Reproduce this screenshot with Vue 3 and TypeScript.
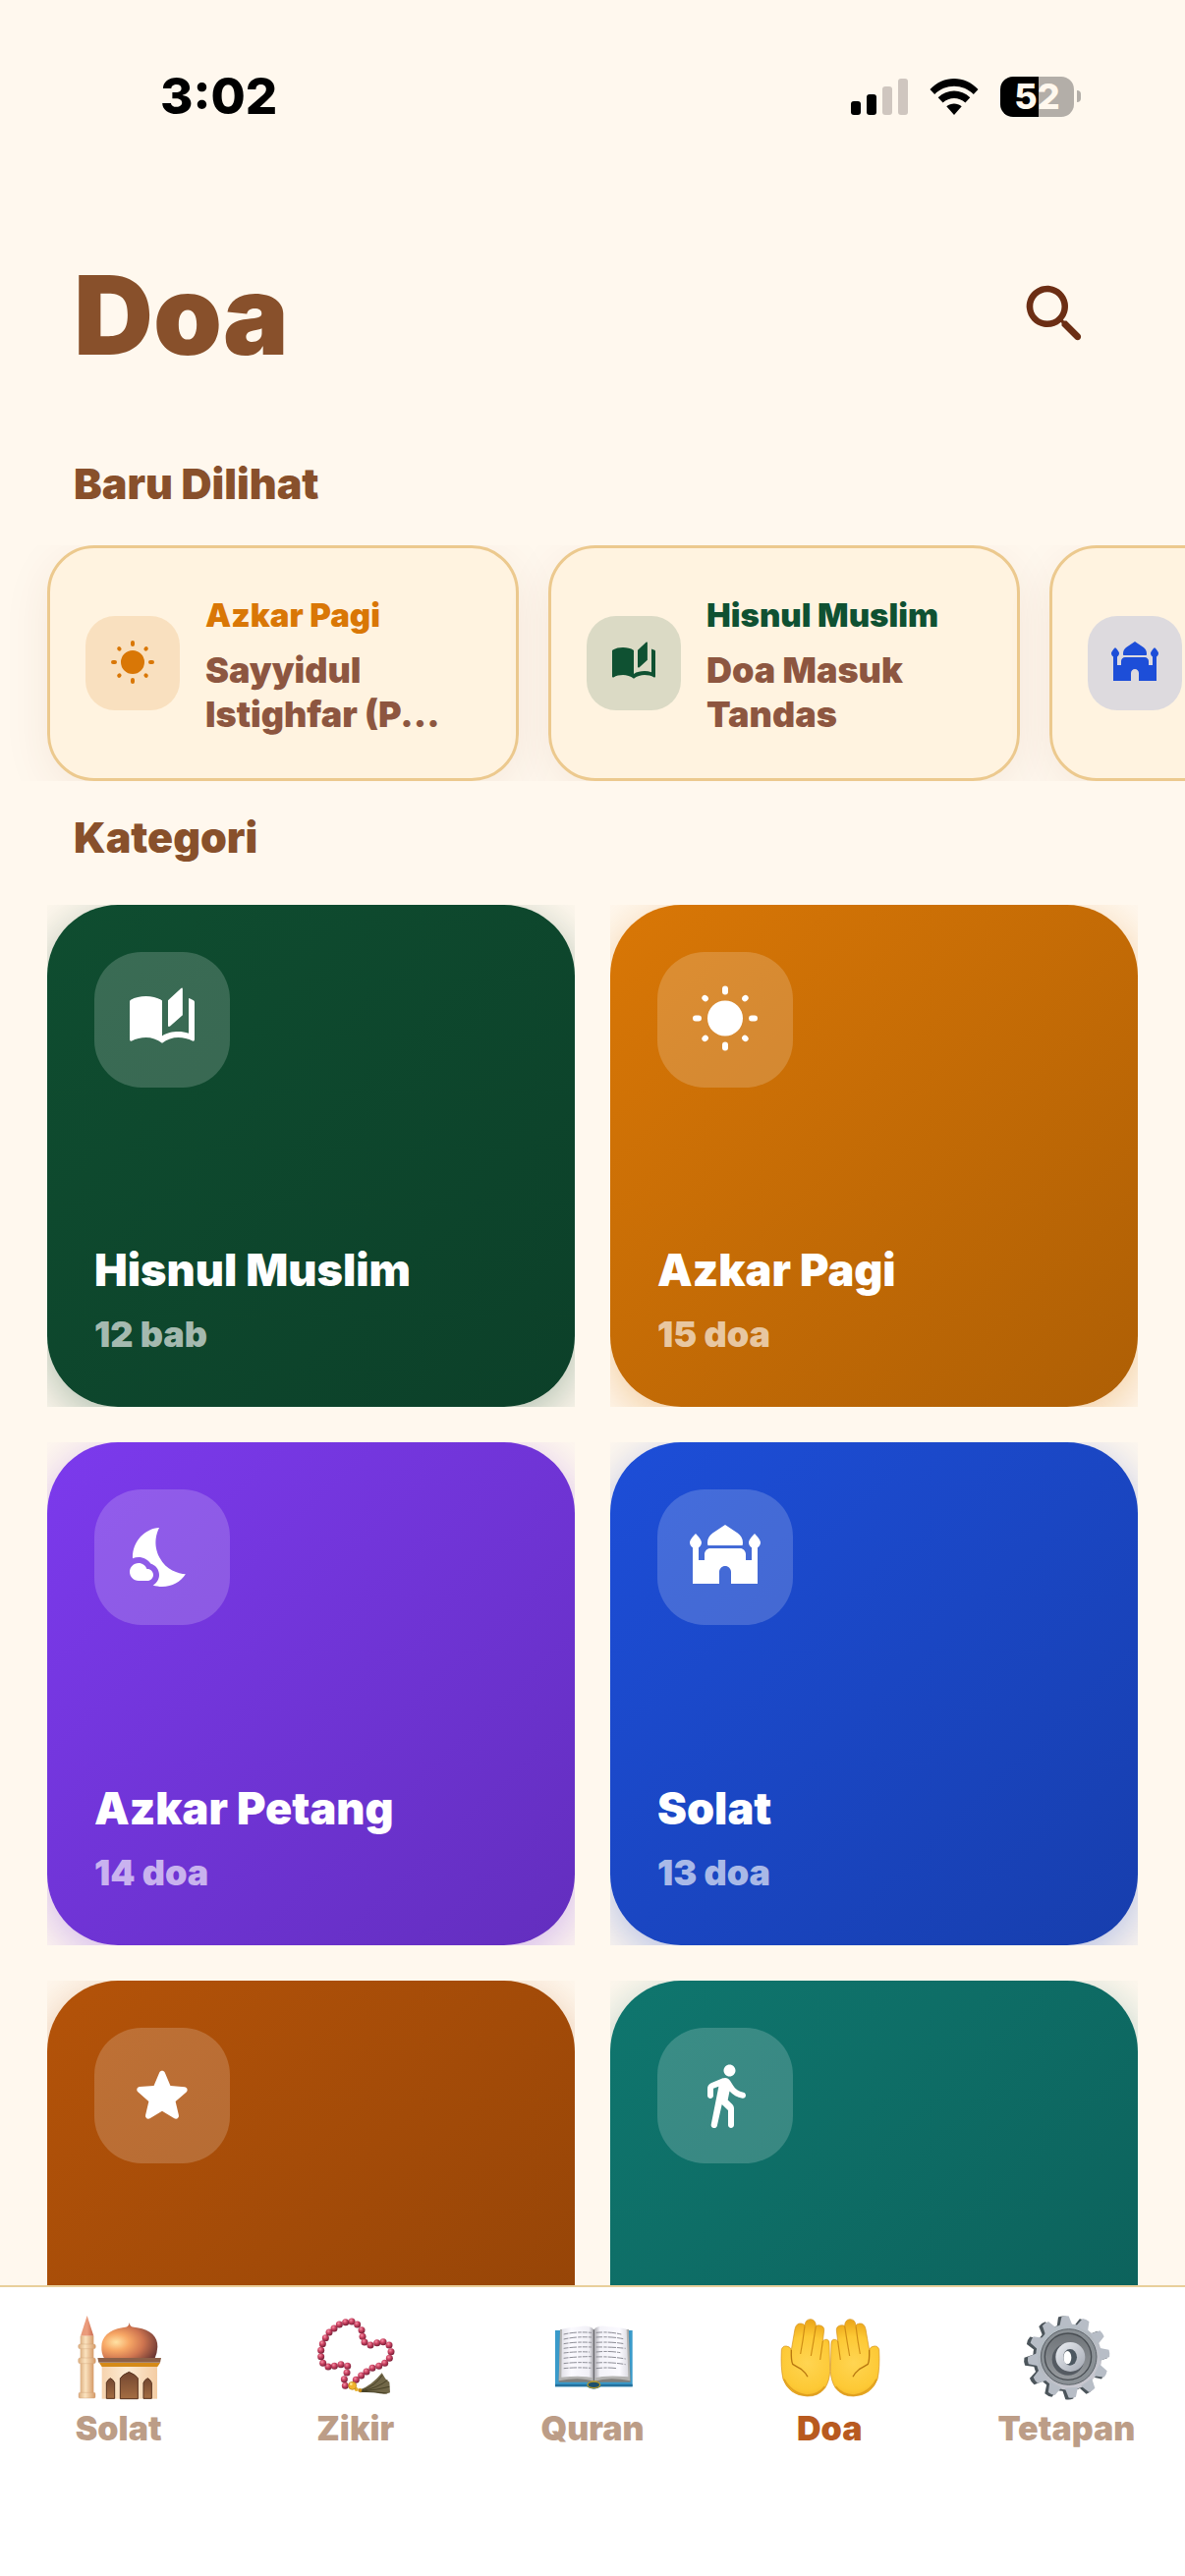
<script setup lang="ts">
type IconName = 'book' | 'sun' | 'moon' | 'mosque' | 'star' | 'walk'

interface RecentItem {
  icon: IconName
  color: string
  category?: string
  name?: string
}

interface Category {
  icon: IconName
  from: string
  to: string
  title?: string
  count?: string
}

const icons: Record<IconName, string> = {
  book: 'M1 5.9Q1 5.5 1.35 5.25C2.8 4.4 4.6 4 6.5 4C8.45 4 10.55 4.4 12 5.5V17.5C13.45 16.4 15.55 16 17.5 16C18.7 16 19.8 16.2 21 16.6V4.7C21.8 5 22.3 5.2 22.65 5.4Q23 5.6 23 6V18.7Q23 19.4 22.3 19.2C21 18.4 19.1 18 17.5 18C15.6 18 13.6 18.6 12 19.9C10.4 18.6 8.4 18 6.5 18C4.9 18 3 18.4 1.7 19.2Q1 19.4 1 18.7ZM14 5.4L18.4 1.3Q18.95 1 18.95 1.6V10.4L14.7 14.2Q14 14.5 14 13.9Z',
  sun: 'M12 5.5a6 6 0 1 0 0 12a6 6 0 1 0 0-12ZM11 1.5a1 1 0 0 1 2 0v1a1 1 0 0 1-2 0ZM11 20.5a1 1 0 0 1 2 0v1a1 1 0 0 1-2 0ZM2 10.5h1a1 1 0 0 1 0 2h-1a1 1 0 0 1 0-2ZM21 10.5h1a1 1 0 0 1 0 2h-1a1 1 0 0 1 0-2ZM4.3 5.2a1 1 0 0 1 1.4-1.4l.4.4a1 1 0 0 1-1.4 1.4ZM18.3 3.8a1 1 0 0 1 1.4 1.4l-.4.4a1 1 0 0 1-1.4-1.4ZM4.3 17.8l.4-.4a1 1 0 0 1 1.4 1.4l-.4.4a1 1 0 0 1-1.4-1.4ZM19.7 17.8a1 1 0 0 1-1.4 1.4l-.4-.4a1 1 0 0 1 1.4-1.4Z',
  moon: 'M11.1 12.08C8.77 7.57 10.2 3.6 11.03 2.01C6.27 2.2 1.98 6.59 1.98 12c0 .14.02.28.02.42C2.62 12.15 3.29 12 4 12c1.66 0 3.18.83 4.1 2.15C9.77 14.63 11 16.17 11 18c0 1.52-.87 2.83-2.12 3.51c.98.32 2.03.5 3.11.5c3.5 0 6.28-1.6 7.97-4.22C17.5 17.52 13.38 16.52 11.1 12.08ZM7 16l-.18 0C6.4 14.84 5.3 14 4 14c-1.66 0-3 1.34-3 3s1.34 3 3 3h3c1.1 0 2-.9 2-2C9 16.9 8.1 16 7 16Z',
  mosque: 'M6.15 8C6.05 7.7 6 7.4 6 7.09C6 5.78 6.65 4.56 7.74 3.84L12 1L16.26 3.84C17.35 4.56 18 5.78 18 7.09C18 7.4 17.95 7.7 17.85 8ZM24 7c0-1.1-2-3-2-3s-2 1.9-2 3c0 .74.4 1.38 1 1.72V13h-2v-2c0-1.1-.9-2-2-2H7c-1.1 0-2 .9-2 2v2H3V8.72C3.6 8.38 4 7.74 4 7c0-1.1-2-3-2-3S0 5.9 0 7c0 .74.4 1.38 1 1.72V21h9v-4c0-1.1.9-2 2-2s2 .9 2 2v4h9V8.72C23.6 8.38 24 7.74 24 7Z',
  star: 'M12 17.27l4.15 2.51c.76.46 1.69-.22 1.49-1.08l-1.1-4.72 3.67-3.18c.67-.58.31-1.68-.57-1.75l-4.83-.41-1.89-4.46c-.34-.81-1.5-.81-1.84 0L9.19 8.63l-4.83.41c-.88.07-1.24 1.17-.57 1.75l3.67 3.18-1.1 4.72c-.2.86.73 1.54 1.49 1.08l4.15-2.5z',
  walk: 'M13.5 5.5c1.1 0 2-.9 2-2s-.9-2-2-2-2 .9-2 2 .9 2 2 2zM9.8 8.9L7.24 21.81c-.13.61.35 1.19.98 1.19h.08c.47 0 .87-.32.98-.78L10.9 15l2.1 2v5c0 .55.45 1 1 1s1-.45 1-1v-5.64c0-.55-.22-1.07-.62-1.45L12.9 13.5l.6-3c1.07 1.24 2.62 2.13 4.36 2.41.6.09 1.14-.39 1.14-1 0-.49-.36-.9-.85-.98-1.52-.25-2.78-1.15-3.45-2.33l-1-1.6c-.4-.6-1-1-1.7-1-.3 0-.5.1-.8.1L7.22 7.78C6.48 8.1 6 8.82 6 9.63V12c0 .55.45 1 1 1s1-.45 1-1V9.6l1.8-.7z'
}

const recents: RecentItem[] = [
  { icon: 'sun', color: '#d97706', category: 'Azkar Pagi', name: 'Sayyidul Istighfar (P...' },
  { icon: 'book', color: '#0f5132', category: 'Hisnul Muslim', name: 'Doa Masuk Tandas' },
  { icon: 'mosque', color: '#1d4ed8' }
]

const categories: Category[] = [
  { icon: 'book', from: '#0f4d30', to: '#0c4029', title: 'Hisnul Muslim', count: '12 bab' },
  { icon: 'sun', from: '#d97706', to: '#ae5f05', title: 'Azkar Pagi', count: '15 doa' },
  { icon: 'moon', from: '#7c3aed', to: '#632ebe', title: 'Azkar Petang', count: '14 doa' },
  { icon: 'mosque', from: '#1d4ed8', to: '#173ead', title: 'Solat', count: '13 doa' },
  { icon: 'star', from: '#b45309', to: '#904207' },
  { icon: 'walk', from: '#0f766e', to: '#0c5e58' }
]

const beads: [number, number][] = [
  [953, 159], [970, 168], [983, 185], [986, 205], [992, 222], [1010, 231], [1030, 224], [1049, 221],
  [1067, 231], [1073, 251], [1068, 271], [1054, 286], [1036, 295], [1016, 301], [998, 312], [982, 324],
  [966, 337], [933, 355], [930, 335], [938, 315], [940, 295], [920, 290], [900, 295], [881, 297],
  [865, 286], [859, 266], [859, 247], [864, 227], [873, 209], [884, 192], [899, 180], [915, 168], [934, 161]
]

const teeth = Array.from({ length: 12 }, (_, i) => i * 30 - 5)

const tabs = [
  { id: 'solat', label: 'Solat', box: '98 120 288 288' },
  { id: 'zikir', label: 'Zikir', box: '821 120 288 288' },
  { id: 'quran', label: 'Quran', box: '345 120 288 288' },
  { id: 'doa', label: 'Doa', box: '49 120 288 288' },
  { id: 'tetapan', label: 'Tetapan', box: '772 120 288 288' }
]
const activeTab = 'doa'
</script>

<template>
  <div class="app">
    <header class="status">
      <span class="time">3:02</span>
      <div class="status-icons">
        <svg class="signal" viewBox="0 0 58 37" aria-hidden="true">
          <rect x="0" y="23" width="10" height="14" rx="3" />
          <rect x="16" y="16" width="10" height="21" rx="3" />
          <rect x="32" y="8" width="10" height="29" rx="3" fill="#cfc6bf" />
          <rect x="48" y="0" width="10" height="37" rx="3" fill="#cfc6bf" />
        </svg>
        <svg class="wifi" viewBox="0 0 50 37" aria-hidden="true">
          <path d="M0.5 11C14-3.6 36-3.6 49.5 11L44.8 16C34 5 16 5 5.2 16Z" />
          <path d="M8.7 19.3C18 10.300 32 10.300 41.300 19.300L36.400 24.500C30 18.400 20 18.400 13.600 24.500Z" />
          <path d="M17.300 28.300C22 24.600 28 24.600 32.700 28.300L25 37Z" />
        </svg>
        <div class="battery-wrap">
          <span class="battery">52</span>
          <span class="battery-tip"></span>
        </div>
      </div>
    </header>

    <main class="content">
      <div class="heading">
        <h1>Doa</h1>
        <button class="search" type="button" aria-label="Cari">
          <svg viewBox="0 0 24 24" aria-hidden="true">
            <path d="M15.500 14h-.79l-.28-.27c1.200-1.400 1.820-3.310 1.480-5.340-.47-2.780-2.790-5-5.590-5.340-4.230-.52-7.790 3.040-7.270 7.270.34 2.800 2.560 5.120 5.340 5.590 2.030.34 3.940-.28 5.340-1.480l.27.28v.79l4.250 4.250c.41.41 1.080.41 1.490 0 .41-.41.41-1.080 0-1.490L15.500 14zm-6 0C7.010 14 5 11.990 5 9.500S7.010 5 9.500 5 14 7.010 14 9.500 11.990 14 9.500 14z" />
          </svg>
        </button>
      </div>

      <section>
        <h2 class="section-title">Baru Dilihat</h2>
        <div class="recent-row">
          <button v-for="item in recents" :key="item.icon" class="recent" type="button" :style="{ '--tone': item.color }">
            <span class="recent-icon">
              <svg viewBox="0 0 24 24" aria-hidden="true"><path :d="icons[item.icon]" /></svg>
            </span>
            <span v-if="item.name" class="recent-text">
              <span class="recent-category">{{ item.category }}</span>
              <span class="recent-name">{{ item.name }}</span>
            </span>
          </button>
        </div>
      </section>

      <section>
        <h2 class="section-title second">Kategori</h2>
        <div class="grid">
          <div v-for="cat in categories" :key="cat.icon" class="cell">
            <button class="category" type="button" :style="{ '--from': cat.from, '--to': cat.to }">
              <span class="category-icon">
                <svg viewBox="0 0 24 24" aria-hidden="true"><path :d="icons[cat.icon]" /></svg>
              </span>
              <span v-if="cat.title" class="category-text">
                <span class="category-title">{{ cat.title }}</span>
                <span class="category-count">{{ cat.count }}</span>
              </span>
            </button>
          </div>
        </div>
      </section>
    </main>

    <nav class="tabs">
      <a v-for="tab in tabs" :key="tab.id" href="#" class="tab" :class="{ active: tab.id === activeTab }">
        <svg class="tab-icon" :viewBox="tab.box" aria-hidden="true">
          <g v-if="tab.id === 'solat'">
            <defs>
              <linearGradient id="tower" x1="0" x2="1">
                <stop offset="0" stop-color="#dcae80" /><stop offset=".4" stop-color="#fbe3bf" /><stop offset="1" stop-color="#d59a68" />
              </linearGradient>
              <linearGradient id="spire" x1="0" x2="1">
                <stop offset="0" stop-color="#e79a78" /><stop offset=".5" stop-color="#eb9c7d" /><stop offset="1" stop-color="#c9694c" />
              </linearGradient>
              <radialGradient id="dome" cx=".26" cy=".55" r=".78">
                <stop offset="0" stop-color="#ffe2a4" /><stop offset=".3" stop-color="#f7a765" /><stop offset=".62" stop-color="#cf7550" /><stop offset="1" stop-color="#6e3a35" />
              </radialGradient>
              <linearGradient id="hall" x1="0" x2="1">
                <stop offset="0" stop-color="#f6d3ae" /><stop offset=".45" stop-color="#fdebd3" /><stop offset="1" stop-color="#f4cda4" />
              </linearGradient>
              <linearGradient id="door" x1="0" y1="0" x2="0" y2="1">
                <stop offset="0" stop-color="#734630" /><stop offset="1" stop-color="#a46d42" />
              </linearGradient>
            </defs>
            <path d="M145 141L165 203H125Z" fill="url(#spire)" />
            <rect x="124" y="203" width="41" height="180" fill="url(#tower)" />
            <rect x="118" y="228" width="53" height="14" rx="5" fill="url(#tower)" stroke="#cc9b70" />
            <rect x="118" y="270" width="53" height="17" rx="5" fill="url(#tower)" stroke="#cc9b70" />
            <rect x="119" y="376" width="51" height="17" rx="4" fill="url(#tower)" stroke="#cc9b70" />
            <path d="M274 162C276 176 283 176 298 178C340 184 361 207 360 236Q359 255 352 271H197Q188 255 189 236C189 207 212 184 252 178C267 176 272 174 274 162Z" fill="url(#dome)" />
            <rect x="190" y="294" width="169" height="101" fill="url(#hall)" />
            <path d="M182 285H368L360 297H190Z" fill="#d58a18" />
            <path d="M177 270H371L368 284H180Z" fill="#8c6048" />
            <path d="M246 395V332Q252 322 273 313Q294 322 300 332V395Z" fill="url(#door)" stroke="#58331f" stroke-width="3" />
            <path d="M204 394V346Q208 336 216 332Q225 336 229 346V394ZM317 394V346Q321 336 330 332Q338 336 342 346V394Z" fill="url(#door)" stroke="#58331f" stroke-width="3" />
          </g>
          <g v-else-if="tab.id === 'zikir'">
            <defs>
              <radialGradient id="bead" cx=".38" cy=".32" r=".7">
                <stop offset="0" stop-color="#f594a8" /><stop offset=".42" stop-color="#cf4766" /><stop offset="1" stop-color="#771c35" />
              </radialGradient>
            </defs>
            <path d="M978 367Q1012 356 1045 316L1056 334L1068 344L1070 376Q1058 383 1038 379Q1012 370 978 376Z" fill="#716748" />
            <path d="M984 369Q1025 356 1046 323M984 371Q1032 362 1062 338M984 372Q1030 368 1068 358M984 373Q1030 374 1060 378" fill="none" stroke="#484126" stroke-width="3" />
            <circle v-for="([x, y], i) in beads" :key="i" :cx="x" :cy="y" r="10.500" fill="url(#bead)" />
            <circle cx="967" cy="366" r="6" fill="#eab32a" />
            <circle cx="978" cy="369" r="6" fill="#c98b16" />
            <circle cx="955" cy="355" r="12" fill="#f2b52d" stroke="#ad7711" stroke-width="2" />
            <circle cx="951" cy="350" r="4" fill="#ffe88c" />
          </g>
          <g v-else-if="tab.id === 'quran'">
            <defs>
              <linearGradient id="leftPage" x1="0" x2="1">
                <stop offset="0" stop-color="#e2e1e8" /><stop offset=".3" stop-color="#fbfaff" /><stop offset=".85" stop-color="#f1f0f6" /><stop offset="1" stop-color="#a5a4aa" />
              </linearGradient>
              <linearGradient id="rightPage" x1="0" x2="1">
                <stop offset="0" stop-color="#a5a4aa" /><stop offset=".18" stop-color="#f4f3f9" /><stop offset=".75" stop-color="#fbfaff" /><stop offset="1" stop-color="#dddce3" />
              </linearGradient>
            </defs>
            <path d="M375 186H611V358H514Q493 371 472 358H375Z" fill="#399aca" />
            <path d="M375 350H611V358H514Q493 371 472 358H375Z" fill="#25719d" />
            <path d="M390 184H600L605 344H510Q493 352 476 344H386Z" fill="#807f7c" />
            <path d="M390 184L386 340Q450 326 493 342Q540 326 604 340L599 184" fill="#b3b2b0" />
            <path d="M396 182Q420 176 448 175Q480 168 493 184V332Q460 322 394 329Z" fill="url(#leftPage)" />
            <path d="M493 184Q506 168 538 175Q570 176 593 182L598 328Q530 322 493 332Z" fill="url(#rightPage)" />
            <path d="M401 198Q440 189 486 193M401 213Q440 204 486 207M401 227Q440 220 486 223M401 241Q440 235 486 237M401 255Q440 250 480 252M401 271Q440 266 486 266M401 287Q440 282 486 285M401 302Q440 298 484 301" fill="none" stroke="#8d8d96" stroke-width="3" stroke-dasharray="15 3 22 4 11 3" />
            <path d="M500 193Q540 189 577 198M500 207Q545 204 584 212M500 223Q545 220 586 227M500 237Q545 236 590 241M500 252Q540 248 574 254M500 267Q545 265 590 273M500 285Q545 282 590 290M500 302Q535 298 563 302" fill="none" stroke="#8d8d96" stroke-width="3" stroke-dasharray="19 4 10 3 25 3" />
            <path d="M493 184V340" stroke="#5c5c60" stroke-width="3" />
            <ellipse cx="493" cy="352" rx="19" ry="10" fill="#1c506c" stroke="#b39728" stroke-width="4" />
          </g>
          <g v-else-if="tab.id === 'doa'">
            <defs>
              <radialGradient id="palm" gradientUnits="userSpaceOnUse" cx="125" cy="285" r="125">
                <stop offset="0" stop-color="#ffd552" /><stop offset=".65" stop-color="#fdc935" /><stop offset="1" stop-color="#eda91c" />
              </radialGradient>
              <g id="hand">
                <path d="M47 245Q50 233 62 234Q74 235 77 246L88 182Q92 163 107 165Q116 166 118 171Q120 152 136 152Q151 153 152 172Q158 169 166 171Q178 174 177 186L173 219Q178 212 186 214Q194 216 193 228L195 310Q194 340 180 362Q160 388 125 387Q70 384 52 335Q44 300 47 245Z" fill="url(#palm)" stroke="#d5911a" stroke-width="2" />
                <path d="M55 335Q76 378 125 384Q160 384 179 358" fill="none" stroke="#d28c16" stroke-width="5" opacity=".6" />
                <path d="M118 172Q113 215 105 258M152 173Q145 220 137 264M173 219L165 276" fill="none" stroke="#cf8d16" stroke-width="3.500" />
                <path d="M77 246Q76 278 81 289Q96 298 108 305Q121 315 127 328" fill="none" stroke="#b87710" stroke-width="4" />
              </g>
            </defs>
            <use href="#hand" />
            <use href="#hand" transform="translate(392 0) scale(-1 1)" />
          </g>
          <g v-else>
            <defs>
              <linearGradient id="steel" x1="0" y1="0" x2=".6" y2="1">
                <stop offset="0" stop-color="#b8c2ca" /><stop offset=".5" stop-color="#b2b8bf" /><stop offset="1" stop-color="#c9c8d0" />
              </linearGradient>
              <linearGradient id="dish" x1="0" y1="0" x2="0" y2="1">
                <stop offset="0" stop-color="#6f7479" /><stop offset="1" stop-color="#969a9e" />
              </linearGradient>
              <linearGradient id="hub" x1="0" y1="0" x2="1" y2="1">
                <stop offset="0" stop-color="#eceff4" /><stop offset="1" stop-color="#a2a7b1" />
              </linearGradient>
            </defs>
            <g fill="#4c555b">
              <circle cx="916" cy="270" r="102" />
              <path v-for="a in teeth" :key="a" d="M-20-92L-12-126Q0-130 12-126L20-92Z" :transform="`translate(915 270) rotate(${a})`" />
            </g>
            <g fill="#b7bdc6">
              <circle cx="924" cy="267" r="101" fill="url(#steel)" />
              <path v-for="a in teeth" :key="a" d="M-20-94L-11-124Q0-127 11-124L20-94Z" :transform="`translate(924 267) rotate(${a})`" />
            </g>
            <circle cx="924" cy="267" r="85" fill="#8a9095" stroke="#5e646a" stroke-width="3" />
            <circle cx="922" cy="266" r="71" fill="url(#dish)" stroke="#484d52" stroke-width="4" />
            <circle cx="922" cy="274" r="49" fill="#555b62" />
            <circle cx="929" cy="267" r="45" fill="url(#hub)" />
            <ellipse cx="928" cy="268" rx="21" ry="25" fill="#4d5861" />
            <ellipse cx="920" cy="269" rx="12" ry="20" fill="#fff" />
          </g>
        </svg>
        <span>{{ tab.label }}</span>
      </a>
    </nav>
  </div>
</template>

<style>
body {
  background: #fff8ee;
}
</style>

<style scoped>
.app {
  display: flex;
  flex-direction: column;
  height: 100vh;
  overflow: hidden;
  background: #fff8ee;
  color: #88502b;
  font-family: Inter, 'Liberation Sans', sans-serif;
  font-weight: 900;
}

.app *,
.app {
  box-sizing: border-box;
}

button {
  margin: 0;
  padding: 0;
  border: 0;
  background: none;
  font: inherit;
  color: inherit;
  text-align: left;
  cursor: pointer;
}

svg {
  display: block;
  fill: currentColor;
}

.status {
  flex: none;
  display: flex;
  align-items: center;
  justify-content: space-between;
  height: 186px;
  padding: 10px 106px 0 163px;
  color: #000;
}

.time {
  font-size: 51px;
  font-weight: 800;
  line-height: 60px;
}

.status-icons {
  display: flex;
  align-items: center;
  gap: 22px;
}

.signal {
  width: 58px;
  height: 37px;
}

.wifi {
  width: 50px;
  height: 37px;
}

.battery-wrap {
  display: flex;
  align-items: center;
  gap: 3px;
}

.battery {
  width: 75px;
  border-radius: 13px;
  background: linear-gradient(90deg, #000 52%, #b3aea8 52%);
  color: #fff8ee;
  font-size: 36px;
  font-weight: 800;
  line-height: 41px;
  text-align: center;
}

.battery-tip {
  width: 4px;
  height: 12px;
  border-radius: 0 4px 4px 0;
  background: #b3aea8;
}

.content {
  flex: 1;
  min-height: 0;
  overflow-y: auto;
  scrollbar-width: none;
}

.heading {
  display: flex;
  align-items: center;
  justify-content: space-between;
  padding: 66px 60px 77px 75px;
}

h1 {
  margin: 0;
  font-size: 112px;
  font-weight: 900;
  line-height: 136px;
}

.search {
  display: flex;
  align-items: center;
  justify-content: center;
  width: 144px;
  height: 136px;
  color: #6c2e14;
}

.search svg {
  width: 78px;
  height: 78px;
}

.section-title {
  margin: 0 75px 36px;
  font-size: 43px;
  font-weight: 900;
  line-height: 54px;
}

.section-title.second {
  margin-top: 30px;
  margin-bottom: 42px;
}

.recent-row {
  display: flex;
  gap: 30px;
  padding: 0 48px;
  overflow-x: auto;
  scrollbar-width: none;
}

.recent {
  flex: none;
  display: flex;
  align-items: center;
  gap: 26px;
  width: 480px;
  height: 240px;
  padding: 0 36px;
  border: 3px solid #ecc98e;
  border-radius: 48px;
  background: #fff3e0;
  box-shadow: 0 12px 48px rgba(124, 45, 18, 0.08);
}

.recent-icon {
  flex: none;
  display: grid;
  place-items: center;
  width: 96px;
  height: 96px;
  border-radius: 30px;
  background: color-mix(in srgb, var(--tone) 15%, transparent);
  color: var(--tone);
}

.recent-icon svg {
  width: 48px;
  height: 48px;
}

.recent-text {
  display: flex;
  flex-direction: column;
  gap: 8px;
}

.recent-category {
  color: var(--tone);
  font-size: 33px;
  line-height: 51px;
}

.recent-name {
  color: #8d5640;
  font-size: 36px;
  line-height: 45px;
}

.grid {
  display: grid;
  grid-template-columns: 1fr 1fr;
  gap: 36px;
  padding: 0 48px 48px;
}

.cell {
  aspect-ratio: 21 / 20;
  overflow: hidden;
}

.category {
  display: flex;
  flex-direction: column;
  justify-content: space-between;
  width: 100%;
  height: 100%;
  padding: 48px;
  border-radius: 72px;
  background: linear-gradient(to bottom right, var(--from), var(--to));
  box-shadow: 0 12px 48px color-mix(in srgb, var(--from) 35%, transparent);
  color: #fff;
}

.category-icon {
  display: grid;
  place-items: center;
  width: 138px;
  height: 138px;
  border-radius: 48px;
  background: rgba(255, 255, 255, 0.18);
}

.category-icon svg {
  width: 72px;
  height: 72px;
}

.category-text {
  display: flex;
  flex-direction: column;
  gap: 12px;
}

.category-title {
  font-size: 45px;
  line-height: 56px;
}

.category-count {
  color: rgba(255, 255, 255, 0.65);
  font-size: 36px;
  line-height: 51px;
}

.tabs {
  flex: none;
  display: flex;
  padding: 22px 0 130px;
  border-top: 2px solid #e9cf9b;
  background: #fff;
}

.tab {
  flex: 1;
  display: flex;
  flex-direction: column;
  align-items: center;
  gap: 6px;
  color: #bc9d87;
  font-size: 34px;
  line-height: 40px;
  text-decoration: none;
}

.tab.active {
  color: #b85a20;
}

.tab-icon {
  width: 96px;
  height: 96px;
  overflow: visible;
}
</style>
